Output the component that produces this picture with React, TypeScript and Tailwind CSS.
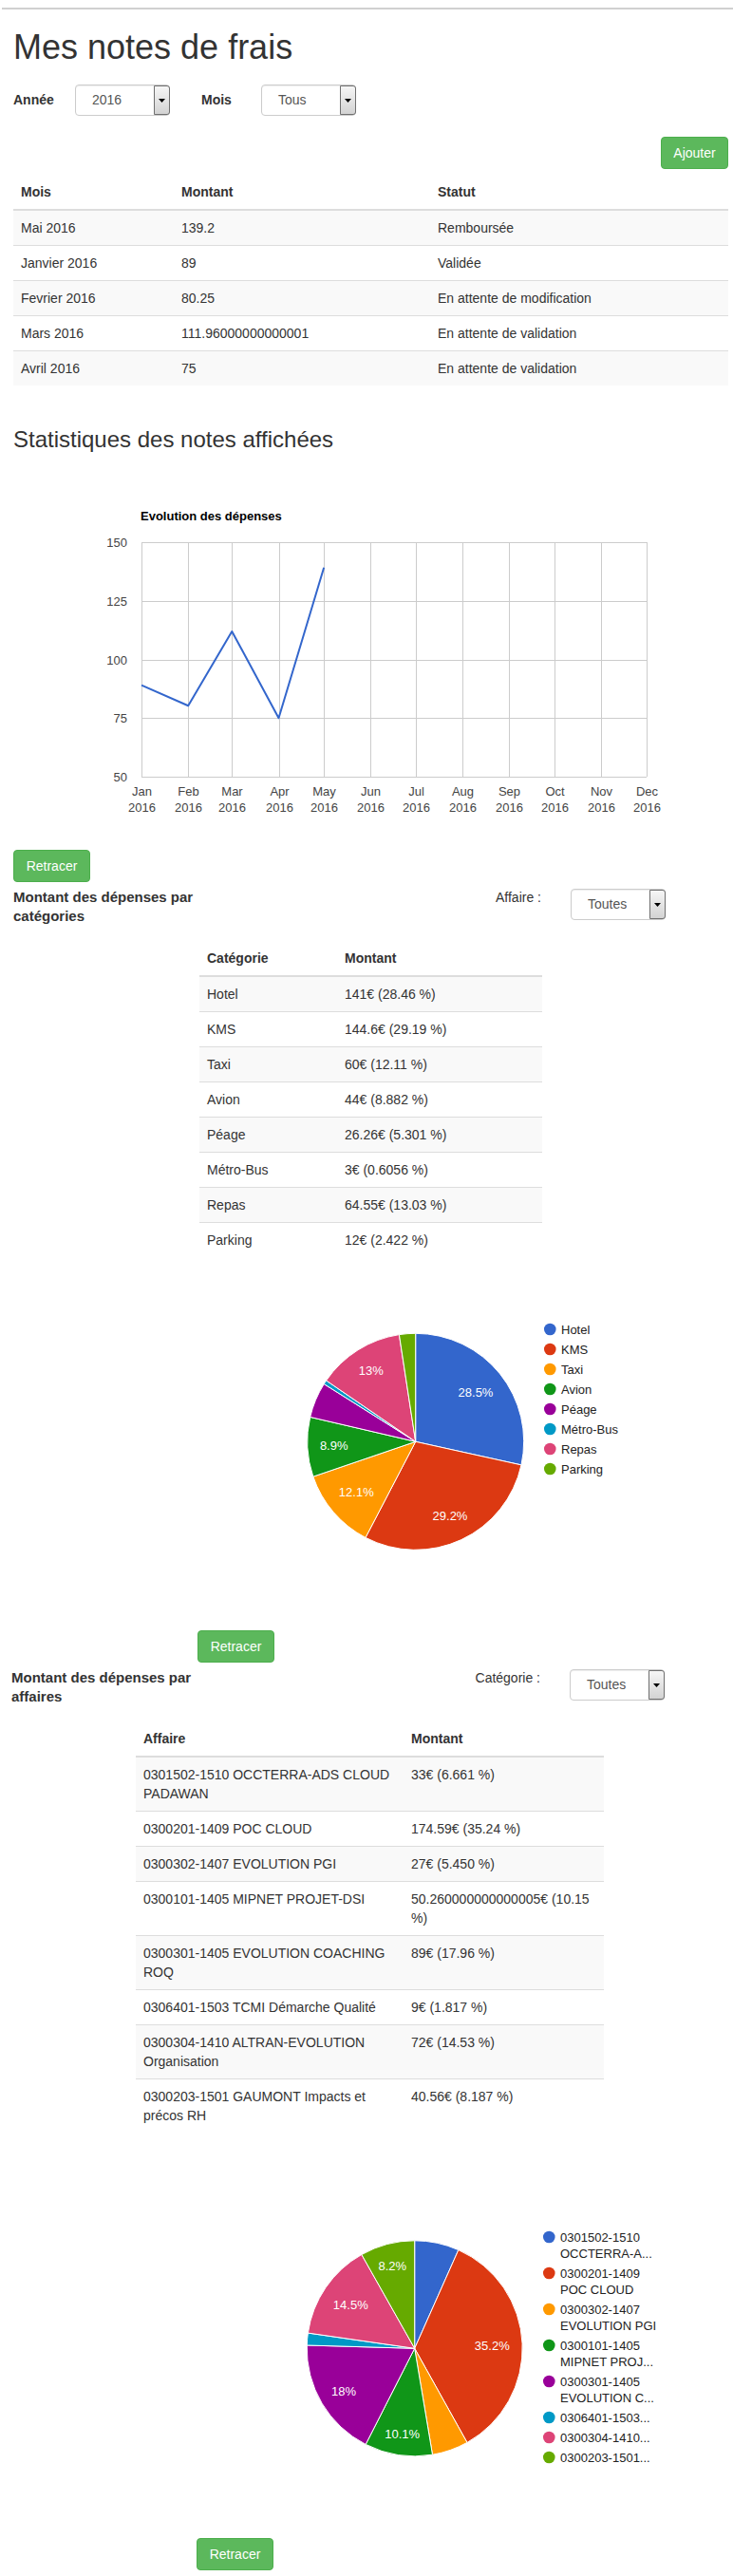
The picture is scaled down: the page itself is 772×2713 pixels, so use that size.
import React from "react";

const COLORS = ["#3366cc", "#dc3912", "#ff9900", "#109618", "#990099", "#0099c6", "#dd4477", "#66aa00"];
const SVG_FONT = "Liberation Sans, Arial, sans-serif";

function Select({ value }: { value: string }) {
  return (
    <div className="relative flex h-[33px] w-[100px] items-center rounded-[4px] border border-[#ccc] bg-white pl-[17px] text-[14px] text-[#555] shadow-[inset_0_1px_1px_rgba(0,0,0,0.075)]">
      <span>{value}</span>
      <div className="absolute bottom-0 right-[-1px] top-0 flex w-[17px] items-center justify-center rounded-r-[3px] border border-[#707070] bg-linear-to-b from-[#f6f6f6] to-[#d3d3d3]">
        <svg width="7" height="4" viewBox="0 0 7 4">
          <path d="M0 0H7L3.5 4Z" fill="#000" />
        </svg>
      </div>
    </div>
  );
}

function GreenButton({ children, className }: { children: React.ReactNode; className: string }) {
  return (
    <button
      className={
        "block h-[34px] rounded-[4px] border border-[#4cae4c] bg-[#5cb85c] text-center text-[14px] leading-5 text-white " +
        className
      }
    >
      {children}
    </button>
  );
}

type TableProps = {
  headers: string[];
  rows: string[][];
  colClasses: string[];
  tableClass: string;
};

function DataTable({ headers, rows, colClasses, tableClass }: TableProps) {
  return (
    <table className={"table-fixed border-collapse text-[14px] leading-5 text-[#333] " + tableClass}>
      <colgroup>
        {colClasses.map((c, i) => (
          <col key={i} className={c} />
        ))}
      </colgroup>
      <thead>
        <tr>
          {headers.map((h) => (
            <th key={h} className="border-b-2 border-[#ddd] p-2 text-left align-bottom font-bold">
              {h}
            </th>
          ))}
        </tr>
      </thead>
      <tbody>
        {rows.map((r, i) => (
          <tr key={i} className={i % 2 === 0 ? "bg-[#f9f9f9]" : "bg-white"}>
            {r.map((c, j) => (
              <td key={j} className={i > 0 ? "border-t border-[#ddd] p-2 align-top" : "p-2 align-top"}>
                {c}
              </td>
            ))}
          </tr>
        ))}
      </tbody>
    </table>
  );
}

function LineChart() {
  const x0 = 149;
  const k = 532 / 335;
  const months = [0, 31, 60, 91, 121, 152, 182, 213, 244, 274, 305, 335];
  const names = ["Jan", "Feb", "Mar", "Apr", "May", "Jun", "Jul", "Aug", "Sep", "Oct", "Nov", "Dec"];
  const top = 571;
  const bottom = 818;
  const yv = (v: number) => bottom - ((v - 50) / 100) * (bottom - top);
  const xd = (d: number) => x0 + d * k;
  const pts: [number, number][] = [
    [0, 89],
    [31, 80.25],
    [60, 111.96],
    [91, 75],
    [121, 139.2],
  ];
  const ticks = [150, 125, 100, 75, 50];
  return (
    <svg
      className="-ml-[14px] block"
      width="772"
      height="414"
      viewBox="0 476 772 414"
      fontFamily={SVG_FONT}
    >
      <text x={148} y={548} fontSize={13} fontWeight="bold" fill="#000">
        Evolution des dépenses
      </text>
      {ticks.map((t) => {
        const y = Math.round(yv(t)) + 0.5;
        return (
          <g key={t}>
            <line x1={x0} x2={681} y1={y} y2={y} stroke="#cccccc" strokeWidth={1} />
            <text x={134} y={y + 4.5} fontSize={13} fill="#444" textAnchor="end">
              {t}
            </text>
          </g>
        );
      })}
      {months.map((d, i) => {
        const x = Math.round(xd(d)) + 0.5;
        return (
          <g key={d}>
            <line x1={x} x2={x} y1={top} y2={bottom} stroke="#cccccc" strokeWidth={1} />
            <text x={x} y={838} fontSize={13} fill="#444" textAnchor="middle">
              {names[i]}
            </text>
            <text x={x} y={855} fontSize={13} fill="#444" textAnchor="middle">
              2016
            </text>
          </g>
        );
      })}
      <polyline
        points={pts.map(([d, v]) => `${xd(d)},${yv(v)}`).join(" ")}
        fill="none"
        stroke="#3366cc"
        strokeWidth={2}
        strokeLinejoin="round"
      />
    </svg>
  );
}

type LegendItem = { y: number; lines: string[] };

function PieChart({
  top,
  height,
  cx,
  cy,
  r,
  data,
  labels,
  legend,
  legendCx,
  legendX,
}: {
  top: number;
  height: number;
  cx: number;
  cy: number;
  r: number;
  data: number[];
  labels: { x: number; y: number; t: string }[];
  legend: LegendItem[];
  legendCx: number;
  legendX: number;
}) {
  const total = data.reduce((a, b) => a + b, 0);
  let acc = 0;
  const slices = data.map((v, i) => {
    const a0 = (acc / total) * Math.PI * 2;
    acc += v;
    const a1 = (acc / total) * Math.PI * 2;
    const p0x = cx + r * Math.sin(a0);
    const p0y = cy - r * Math.cos(a0);
    const p1x = cx + r * Math.sin(a1);
    const p1y = cy - r * Math.cos(a1);
    const large = a1 - a0 > Math.PI ? 1 : 0;
    const d = `M${cx},${cy} L${p0x},${p0y} A${r},${r} 0 ${large} 1 ${p1x},${p1y} Z`;
    return <path key={i} d={d} fill={COLORS[i]} stroke="#ffffff" strokeWidth={1} />;
  });
  return (
    <svg
      className="-ml-[14px] block"
      width="772"
      height={height}
      viewBox={`0 ${top} 772 ${height}`}
      fontFamily={SVG_FONT}
    >
      {slices}
      {labels.map((l) => (
        <text key={l.t} x={l.x} y={l.y + 4.5} fontSize={13} fill="#ffffff" textAnchor="middle">
          {l.t}
        </text>
      ))}
      {legend.map((it, i) => (
        <g key={i}>
          <circle cx={legendCx} cy={it.y} r={6.3} fill={COLORS[i]} />
          {it.lines.map((ln, j) => (
            <text key={j} x={legendX} y={it.y + 4.6 + j * 17} fontSize={13} fill="#222">
              {ln}
            </text>
          ))}
        </g>
      ))}
    </svg>
  );
}

export default function App() {
  const notes = [
    ["Mai 2016", "139.2", "Remboursée"],
    ["Janvier 2016", "89", "Validée"],
    ["Fevrier 2016", "80.25", "En attente de modification"],
    ["Mars 2016", "111.96000000000001", "En attente de validation"],
    ["Avril 2016", "75", "En attente de validation"],
  ];
  const cats = [
    ["Hotel", "141€ (28.46 %)"],
    ["KMS", "144.6€ (29.19 %)"],
    ["Taxi", "60€ (12.11 %)"],
    ["Avion", "44€ (8.882 %)"],
    ["Péage", "26.26€ (5.301 %)"],
    ["Métro-Bus", "3€ (0.6056 %)"],
    ["Repas", "64.55€ (13.03 %)"],
    ["Parking", "12€ (2.422 %)"],
  ];
  const affaires = [
    ["0301502-1510 OCCTERRA-ADS CLOUD PADAWAN", "33€ (6.661 %)"],
    ["0300201-1409 POC CLOUD", "174.59€ (35.24 %)"],
    ["0300302-1407 EVOLUTION PGI", "27€ (5.450 %)"],
    ["0300101-1405 MIPNET PROJET-DSI", "50.260000000000005€ (10.15 %)"],
    ["0300301-1405 EVOLUTION COACHING ROQ", "89€ (17.96 %)"],
    ["0306401-1503 TCMI Démarche Qualité", "9€ (1.817 %)"],
    ["0300304-1410 ALTRAN-EVOLUTION Organisation", "72€ (14.53 %)"],
    ["0300203-1501 GAUMONT Impacts et précos RH", "40.56€ (8.187 %)"],
  ];

  return (
    <div className="bg-white pb-[6px] font-['Liberation_Sans',Arial,sans-serif] text-[14px] text-[#333]">
      <div className="pt-2">
        <div className="ml-[2px] h-[2px] bg-[#d0d0d0]" />
      </div>
      <div className="pl-[14px] pr-[5px]">
        <h1 className="mt-[20px] text-[36px] leading-[40px] font-normal text-[#333]">Mes notes de frais</h1>

        <div className="mt-[19px] flex h-[33px] items-center">
          <div className="w-[65px] font-bold">Année</div>
          <Select value="2016" />
          <div className="ml-[33px] w-[63px] font-bold">Mois</div>
          <Select value="Tous" />
        </div>

        <div className="mt-[22px] flex justify-end">
          <GreenButton className="w-[71px]">Ajouter</GreenButton>
        </div>

        <DataTable
          headers={["Mois", "Montant", "Statut"]}
          rows={notes}
          colClasses={["w-[169px]", "w-[270px]", ""]}
          tableClass="mt-[6px] w-[753px]"
        />

        <h3 className="mt-[44px] text-[24px] leading-[26px] font-normal text-[#333]">
          Statistiques des notes affichées
        </h3>

        <LineChart />

        <GreenButton className="mt-[5px] w-[81px]">Retracer</GreenButton>

        <div className="mt-[6px] flex items-start">
          <div className="w-[200px] text-[15px] font-bold leading-5">Montant des dépenses par catégories</div>
          <div className="w-[356px] text-right leading-5">Affaire :</div>
          <div className="ml-[31px] mt-px">
            <Select value="Toutes" />
          </div>
        </div>

        <DataTable
          headers={["Catégorie", "Montant"]}
          rows={cats}
          colClasses={["w-[145px]", "w-[216px]"]}
          tableClass="ml-[196px] mt-[16px] w-[361px]"
        />

        <PieChart
          top={1324}
          height={393}
          cx={437.7}
          cy={1518.3}
          r={114}
          data={[28.46, 29.19, 12.11, 8.882, 5.301, 0.6056, 13.03, 2.422]}
          labels={[
            { x: 501, y: 1466, t: "28.5%" },
            { x: 474, y: 1596, t: "29.2%" },
            { x: 375.3, y: 1571, t: "12.1%" },
            { x: 351.7, y: 1522, t: "8.9%" },
            { x: 390.7, y: 1443.3, t: "13%" },
          ]}
          legend={[
            { y: 1400, lines: ["Hotel"] },
            { y: 1421, lines: ["KMS"] },
            { y: 1442, lines: ["Taxi"] },
            { y: 1463, lines: ["Avion"] },
            { y: 1484, lines: ["Péage"] },
            { y: 1505, lines: ["Métro-Bus"] },
            { y: 1526, lines: ["Repas"] },
            { y: 1547, lines: ["Parking"] },
          ]}
          legendCx={579.3}
          legendX={591}
        />

        <GreenButton className="ml-[194px] w-[81px]">Retracer</GreenButton>

        <div className="mt-[6px] flex items-start">
          <div className="-ml-[2px] w-[202px] text-[15px] font-bold leading-5">Montant des dépenses par affaires</div>
          <div className="w-[355px] text-right leading-5">Catégorie :</div>
          <div className="ml-[31px] mt-px">
            <Select value="Toutes" />
          </div>
        </div>

        <DataTable
          headers={["Affaire", "Montant"]}
          rows={affaires}
          colClasses={["w-[282px]", "w-[211px]"]}
          tableClass="ml-[129px] mt-[16px] w-[493px]"
        />

        <PieChart
          top={2246}
          height={427}
          cx={436.7}
          cy={2473.3}
          r={113.5}
          data={[6.661, 35.24, 5.45, 10.15, 17.96, 1.817, 14.53, 8.187]}
          labels={[
            { x: 518.3, y: 2470, t: "35.2%" },
            { x: 423.7, y: 2563.3, t: "10.1%" },
            { x: 362, y: 2518.3, t: "18%" },
            { x: 369.3, y: 2427.3, t: "14.5%" },
            { x: 413.3, y: 2386, t: "8.2%" },
          ]}
          legend={[
            { y: 2356, lines: ["0301502-1510", "OCCTERRA-A..."] },
            { y: 2394, lines: ["0300201-1409", "POC CLOUD"] },
            { y: 2432, lines: ["0300302-1407", "EVOLUTION PGI"] },
            { y: 2470, lines: ["0300101-1405", "MIPNET PROJ..."] },
            { y: 2508, lines: ["0300301-1405", "EVOLUTION C..."] },
            { y: 2546, lines: ["0306401-1503..."] },
            { y: 2567, lines: ["0300304-1410..."] },
            { y: 2588, lines: ["0300203-1501..."] },
          ]}
          legendCx={578.3}
          legendX={590}
        />

        <GreenButton className="ml-[193px] w-[81px]">Retracer</GreenButton>
      </div>
    </div>
  );
}
